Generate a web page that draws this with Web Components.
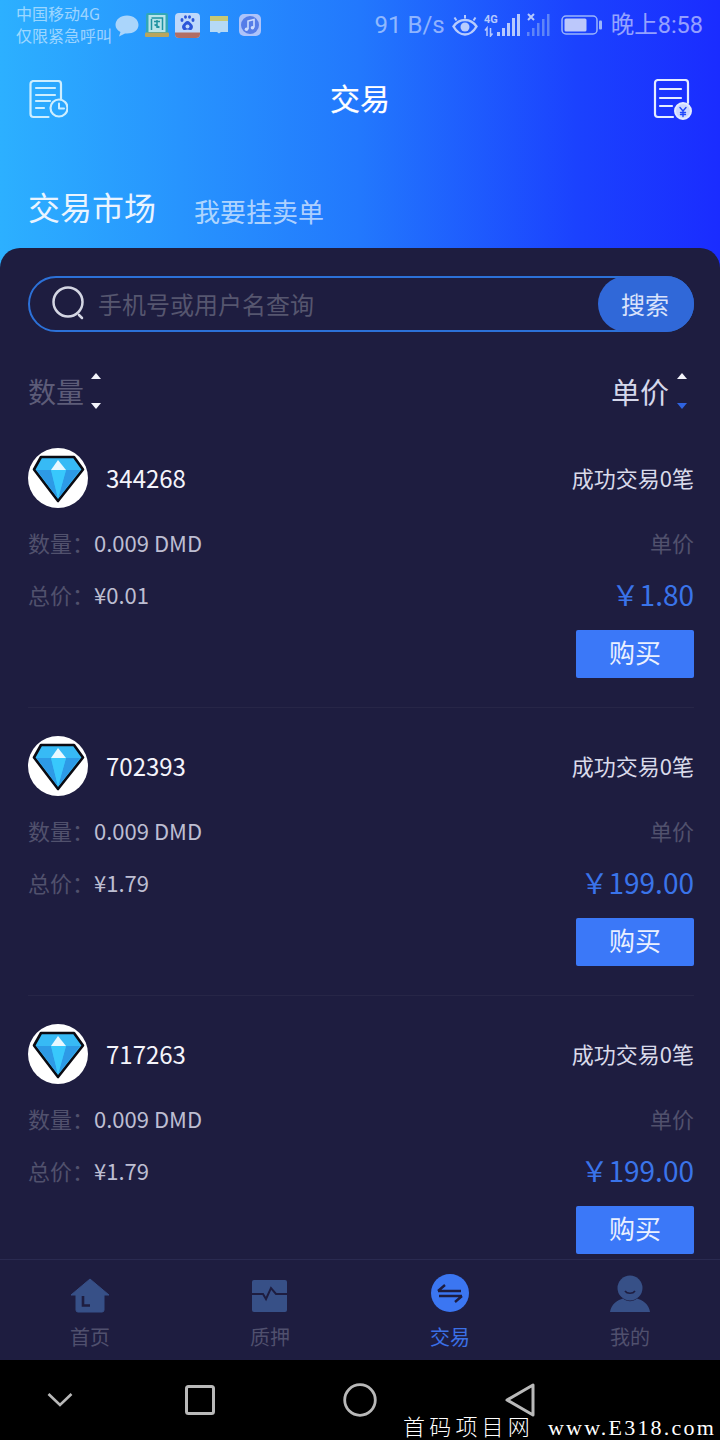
<!DOCTYPE html>
<html lang="zh-CN"><head><meta charset="utf-8"><title>交易</title>
<style>
html,body{margin:0;padding:0;background:#000}
body{width:720px;height:1440px;overflow:hidden;font-family:"Noto Sans CJK SC","Noto Sans",sans-serif;position:relative}
</style></head><body>
<app-shell>
  <status-bar></status-bar>
  <app-header></app-header>
  <market-panel>
    <search-box></search-box>
    <sort-row></sort-row>
    <trade-card uid="344268" total="¥0.01" price="1.80"></trade-card>
    <trade-card uid="702393" total="¥1.79" price="199.00"></trade-card>
    <trade-card uid="717263" total="¥1.79" price="199.00"></trade-card>
  </market-panel>
  <tab-bar>
    <tab-item label="首页"><svg width="40" height="40" viewBox="0 0 40 40"><path d="M20 3L39 19H34V34a2 2 0 0 1-2 2H8a2 2 0 0 1-2-2V19H1Z" fill="#375087" stroke="#375087" stroke-linejoin="round"/><path d="M13 20V29.500H20" fill="none" stroke="#1e1d40" stroke-width="2.600"/></svg></tab-item>
    <tab-item label="质押"><svg width="40" height="40" viewBox="0 0 40 40"><rect x="2" y="4" width="35" height="32" rx="2" fill="#375087"/><path d="M2 18H13L16 23L21 12L26 18H37" fill="none" stroke="#1e1d40" stroke-width="2"/></svg></tab-item>
    <tab-item label="交易" active><svg width="40" height="40" viewBox="0 0 40 40" style="overflow:visible"><circle cx="20" cy="17" r="19" fill="#3b76f2"/><path d="M8 15H31M8 15L15 9M9 20H32M32 20L25 26" fill="none" stroke="#1e1d40" stroke-width="2.400"/></svg></tab-item>
    <tab-item label="我的"><svg width="42" height="40" viewBox="0 0 42 40" style="overflow:visible"><path d="M1 36C2 28 9 24 14 22.500C18 26 24 26 28 22.500C33 24 40 28 41 36Z" fill="#375087"/><circle cx="21" cy="12" r="12.500" fill="#375087"/><path d="M16 15C18 18 24 18 26 15" fill="none" stroke="#1e1d40" stroke-width="1.600"/></svg></tab-item>
  </tab-bar>
  <nav-bar></nav-bar>
</app-shell>
<water-mark></water-mark>
<script>
function def(name,html){
  customElements.define(name,class extends HTMLElement{
    constructor(){super();this.attachShadow({mode:'open'});}
    connectedCallback(){this.shadowRoot.innerHTML=typeof html==='function'?html(this):html;}
  });
}
def('app-shell',`<style>:host{display:flex;flex-direction:column;width:720px;height:1440px;position:relative;background:linear-gradient(90deg,#2cb0ff 0%,#2278fd 50%,#1b42fe 80%,#1a2cff 100%) top/100% 280px no-repeat #000;overflow:hidden}</style><slot></slot>`);

def('status-bar',`<style>
:host{display:flex;height:50px;box-sizing:border-box;align-items:center;color:rgba(255,255,255,.55);padding:0 17px 0 16px;flex:none}
.c{font-size:16px;line-height:22px;width:98px;white-space:nowrap;margin-top:-3px}
.ic{display:flex;align-items:center;gap:6px;margin-left:1px;opacity:.9}
.sp{flex:1}
.net{font:24px/30px Roboto,sans-serif;color:rgba(255,255,255,.5)}
.tm{font-size:23.500px;line-height:30px;color:rgba(255,255,255,.55);font-family:Roboto,"Noto Sans CJK SC",sans-serif;margin-left:9px}
svg{display:block;flex:none}
.r{display:flex;align-items:center}
</style>
<div class="c">中国移动4G<br>仅限紧急呼叫</div>
<div class="ic">
<svg width="24" height="24" viewBox="0 0 24 24"><path d="M12 2.500C18.500 2.500 23.500 6.500 23.500 12C23.500 17 18.500 20.500 12 20.500H10L4 23.500L5.500 19C2.500 17.500.5 15 .5 12C.5 6.500 5.500 2.500 12 2.500Z" fill="#b9dcfb"/></svg>
<svg width="24" height="26" viewBox="0 0 24 26"><rect x="1" y="1" width="22" height="24" rx="2" fill="#33a9b0"/><rect x="3.500" y="3" width="17" height="17" fill="#c9ede8"/><path d="M6.500 7V18M6.500 6h11V18M9 9.500h6M12 8v8M9.500 12.500l5 3" stroke="#1f9397" stroke-width="1.500" fill="none"/><rect x="0" y="20.500" width="24" height="4.500" rx="1" fill="#c9a74c"/></svg>
<svg width="25" height="25" viewBox="0 0 25 25" style="margin-left:0"><rect width="25" height="25" rx="4" fill="#cfe0fb"/><path d="M0 19.500h25V21a4 4 0 0 1-4 4H4a4 4 0 0 1-4-4Z" fill="#c06a55"/><g fill="#2c4fd5"><ellipse cx="7" cy="7" rx="1.500" ry="2"/><ellipse cx="18" cy="7" rx="1.500" ry="2"/><ellipse cx="10.500" cy="4" rx="1.500" ry="1.800"/><ellipse cx="14.500" cy="4" rx="1.500" ry="1.800"/><path d="M12.500 8c2 0 3 2 4.500 3.500c2 2 .5 6-2 5.500c-1 -.3-1.500-.5-2.500-.5s-1.500.2-2.500.5c-2.500.5-4-3.500-2-5.500c1.500-1.500 2.500-3.500 4.500-3.500Z"/></g><circle cx="12.500" cy="13.500" r="2" fill="#cfe0fb"/></svg>
<svg width="20" height="20" viewBox="0 0 20 20" style="margin-left:3px"><path d="M1 1h18v5H1Z" fill="#d9cf66"/><path d="M1 6h18v11h-7l-2 1.500L8 17H1Z" fill="#c5e2f5"/></svg>
<svg width="22" height="22" viewBox="0 0 22 22" style="margin-left:4px"><rect width="22" height="22" rx="5" fill="#bccafa"/><circle cx="11" cy="11" r="9" fill="#5b7ce6"/><path d="M9 15V7l6-1.500v8" fill="none" stroke="#dde6ff" stroke-width="1.600"/><circle cx="7.500" cy="15.200" r="1.800" fill="#dde6ff"/><circle cx="13.500" cy="13.700" r="1.800" fill="#dde6ff"/></svg>
</div>
<div class="sp"></div>
<div class="r">
<span class="net">91 B/s</span>
<svg style="margin-left:7px" width="26" height="24" viewBox="0 0 26 24" fill="none" stroke="#b8ccfd" stroke-width="2.400"><path d="M1.500 13.500C5 8.500 9 7 13 7S21 8.500 24.500 13.500C21 19.500 17 21.500 13 21.500S5 19.500 1.500 13.500Z"/><circle cx="13" cy="14" r="4.500" fill="#b8ccfd" stroke="none"/><path d="M4.500 7.500L2.500 4.500M13 5.500V2M21.500 7.500L23.500 4.500" stroke-width="2"/></svg>
<svg style="margin-left:6px" width="36" height="24" viewBox="0 0 36 24" fill="#b6c9fd"><text x="0" y="10" font-size="11" font-weight="700" font-family="Roboto">4G</text><path d="M3 23v-8l-2 2.500M6.500 15v8l2-2.500" stroke="#b6c9fd" stroke-width="1.500" fill="none"/><rect x="13" y="19" width="3" height="4"/><rect x="18" y="15" width="3" height="8"/><rect x="23" y="10" width="3" height="13"/><rect x="28" y="5" width="3" height="18"/><rect x="33" y="1" width="3" height="22"/></svg>
<svg style="margin-left:7px" width="24" height="24" viewBox="0 0 24 24" fill="#5f85f7"><path d="M1 1l6 6M7 1l-6 6" stroke="#b6c9fd" stroke-width="2"/><rect x="0" y="19" width="2.500" height="4"/><rect x="5" y="15" width="2.500" height="8"/><rect x="10" y="10" width="2.500" height="13"/><rect x="15" y="6" width="2.500" height="17"/><rect x="20" y="1" width="2.500" height="22"/></svg>
<svg style="margin-left:9px" width="42" height="22" viewBox="0 0 42 22"><rect x="2" y="2" width="35" height="18" rx="4" fill="none" stroke="#9bb5fb" stroke-width="1.500"/><rect x="4.500" y="4.500" width="22" height="13" rx="1.500" fill="#bcc8fb"/><rect x="39" y="6.500" width="3" height="9" rx="1" fill="#9bb5fb"/></svg>
<span class="tm">晚上8:58</span>
</div>`);

def('app-header',`<style>
:host{display:block;height:198px;flex:none;color:#fff;box-sizing:border-box;padding:0 28px}
.top{display:flex;align-items:center;justify-content:space-between;height:100px}
h1{margin:0 0 6px;font-size:30px;font-weight:400;-webkit-text-stroke:.2px #fff;line-height:40px}
.tabs{display:flex;align-items:baseline;margin-top:32px;gap:38px}
.on{font-size:32px;font-weight:400;line-height:48px;color:#eaf4ff}
.off{font-size:26px;line-height:48px;color:rgba(255,255,255,.65);transform:translateY(2px)}
svg{display:block}
</style>
<div class="top">
<svg width="40" height="40" viewBox="0 0 40 40" fill="none" stroke="#cdeeff" stroke-width="2.200" stroke-linecap="round" stroke-linejoin="round"><path d="M20.500 37H5.500a3 3 0 0 1-3-3V4a3 3 0 0 1 3-3h24.500a3 3 0 0 1 3 3v15"/><path d="M8 8h19M8 15h19M8 21h14M8 28h8"/><circle cx="31" cy="28" r="8.500"/><path d="M31 23.500V28.500H36" stroke-width="2"/></svg>
<h1>交易</h1>
<svg width="40" height="42" viewBox="0 0 40 42" fill="none" stroke="#e4ecff" stroke-width="2.200" stroke-linecap="round" stroke-linejoin="round"><path d="M21 38H6a3 3 0 0 1-3-3V4a3 3 0 0 1 3-3h27a3 3 0 0 1 3 3v20"/><path d="M8 10h21M8 19h21M8 27h12"/><circle cx="31" cy="32" r="8" fill="#cdd8ff" stroke-width="2"/><path d="M28 28.500l3 3.500 3-3.500M31 32V37.500M28.500 33.500h5M28.500 35.500h5" stroke="#2048fa" stroke-width="1.400"/></svg>
</div>
<div class="tabs"><span class="on">交易市场</span><span class="off">我要挂卖单</span></div>`);

def('market-panel',`<style>
:host{display:block;flex:1;min-height:0;background:#1e1d40;border-radius:20px 20px 0 0;padding:28px 26px 0 28px;overflow:hidden;box-sizing:border-box}
</style><slot></slot>`);

def('search-box',`<style>
:host{display:flex;height:56px;box-sizing:border-box;border:2px solid #2c71d8;border-radius:28px;align-items:center;position:relative}
svg{margin-left:21px;display:block;flex:none}
.ph{font-size:24px;color:#56566f;margin-left:11px;flex:1;line-height:34px}
button{all:unset;position:absolute;right:-2px;top:-2px;width:96px;height:56px;padding-right:2px;box-sizing:border-box;border-radius:28px;background:#3068d8;color:#d9e2fb;font-size:24px;line-height:56px;text-align:center}
</style>
<svg width="36" height="36" viewBox="0 0 36 36" fill="none" stroke="#d4d6e3" stroke-width="2.500" stroke-linecap="round"><circle cx="17" cy="16" r="14.500"/><path d="M28 29l3 3"/></svg>
<span class="ph">手机号或用户名查询</span><button>搜索</button>`);

def('sort-arrows',el=>`<style>
:host{display:inline-flex;flex-direction:column;justify-content:space-between;height:36px;margin-left:7px}
i{display:block;width:0;height:0;border:5px solid transparent}
.u{border-top:0;border-bottom:6px solid #f4f4fb}
.d{border-bottom:0;border-top:6px solid ${el.getAttribute('down')||'#f4f4fb'}}
</style><i class="u"></i><i class="d"></i>`);

def('sort-row',`<style>
:host{display:flex;justify-content:space-between;align-items:center;height:44px;margin:37px 7px 7px 0;font-size:28px;line-height:40px}
div{display:flex;align-items:center}
.l{color:#5d5c78}.r{color:#d5d7ea;font-size:29px}
</style>
<div class="l">数量<sort-arrows></sort-arrows></div>
<div class="r">单价<sort-arrows style="margin-left:8px" down="#2f63e0"></sort-arrows></div>`);

def('gem-avatar',`<style>:host{display:block;width:60px;height:60px;border-radius:50%;background:#fff;flex:none}svg{display:block}</style>
<svg width="60" height="60" viewBox="0 0 60 60"><path d="M13 9H46L55 21.500L30 53L6 21.500Z" fill="#37baf5" stroke="#0b0b12" stroke-width="2.600" stroke-linejoin="round"/><path d="M8.500 22H23L30 50.500Z" fill="#2d9ae6"/><path d="M52 22H38L30 50.500Z" fill="#2d9ae6"/><path d="M23 22H38L30 50.500Z" fill="#38c8fc"/><path d="M30 12L23 22H38Z" fill="#e8f8ff"/></svg>`);

def('trade-card',el=>{const a=k=>el.getAttribute(k);return `<style>
:host{display:block;height:288px;box-sizing:border-box;padding-top:28px;border-bottom:1px solid #272647}
.hd{display:flex;align-items:center;height:60px}
.hd span{padding-bottom:2px}
.uid{font-size:24px;color:#f4f4fb;margin-left:18px;flex:1}
.ok{font-size:22px;color:#d9daea}
.row{display:flex;justify-content:space-between;align-items:center;height:32px;font-size:22px;color:#51516d}
.row b{font-weight:400;color:#bdbed2}
.r1{margin-top:18px}.r2{margin-top:20px}
.price{font-size:28px;color:#3a74ea}
.act{display:flex;justify-content:flex-end;margin-top:20px}
button{all:unset;width:118px;height:48px;box-sizing:border-box;padding-bottom:4px;border-radius:2px;background:#3b78f8;color:#eaf0ff;font-size:26px;line-height:44px;text-align:center}
</style>
<div class="hd"><gem-avatar></gem-avatar><span class="uid">${a('uid')}</span><span class="ok">成功交易0笔</span></div>
<div class="row r1"><span>数量：<b>0.009 DMD</b></span><span>单价</span></div>
<div class="row r2"><span>总价：<b>${a('total')}</b></span><span class="price">￥${a('price')}</span></div>
<div class="act"><button>购买</button></div>`});

def('tab-item',el=>`<style>
:host{flex:1;display:flex;flex-direction:column;align-items:center;font-size:20px;line-height:24px;color:${el.hasAttribute('active')?'#3b70e6':'#50506e'};padding-top:16px}
.i{height:40px;margin-bottom:9px}
::slotted(svg){display:block}
</style><div class="i"><slot></slot></div><span>${el.getAttribute('label')}</span>`);

def('tab-bar',`<style>
:host{display:flex;height:101px;flex:none;background:#1e1d40;border-top:1px solid #2a2a50;box-sizing:border-box}
</style><slot></slot>`);

def('nav-bar',`<style>
:host{display:block;height:80px;flex:none;background:#000;position:relative}
svg{position:absolute;top:50%;transform:translateY(-50%)}
</style>
<svg style="left:47px" width="26" height="18" viewBox="0 0 26 18" fill="none" stroke="#b9b9b9" stroke-width="2.600"><path d="M1.500 3L13 14L24.500 3"/></svg>
<svg style="left:185px" width="30" height="30" viewBox="0 0 30 30" fill="none" stroke="#b9b9b9" stroke-width="3"><rect x="1.500" y="1.500" width="27" height="27" rx="2"/></svg>
<svg style="left:343px" width="34" height="34" viewBox="0 0 34 34" fill="none" stroke="#b9b9b9" stroke-width="2.800"><circle cx="17" cy="17" r="15.300"/></svg>
<svg style="left:505px" width="30" height="34" viewBox="0 0 30 34" fill="none" stroke="#b9b9b9" stroke-width="3" stroke-linejoin="round"><path d="M28 2V32L2 17Z"/></svg>`);

def('water-mark',`<style>
:host{position:absolute;left:403px;top:1411px;display:block;height:29px;color:#fff;font:22px/29px "Liberation Serif","Noto Sans CJK SC",serif;letter-spacing:2.200px;white-space:nowrap}
.c{font-family:"Noto Sans CJK SC",serif;font-size:22px;font-weight:300;letter-spacing:4.200px;margin-right:14px}
</style><span class="c">首码项目网</span>www.E318.com`);
</script>
</body></html>
